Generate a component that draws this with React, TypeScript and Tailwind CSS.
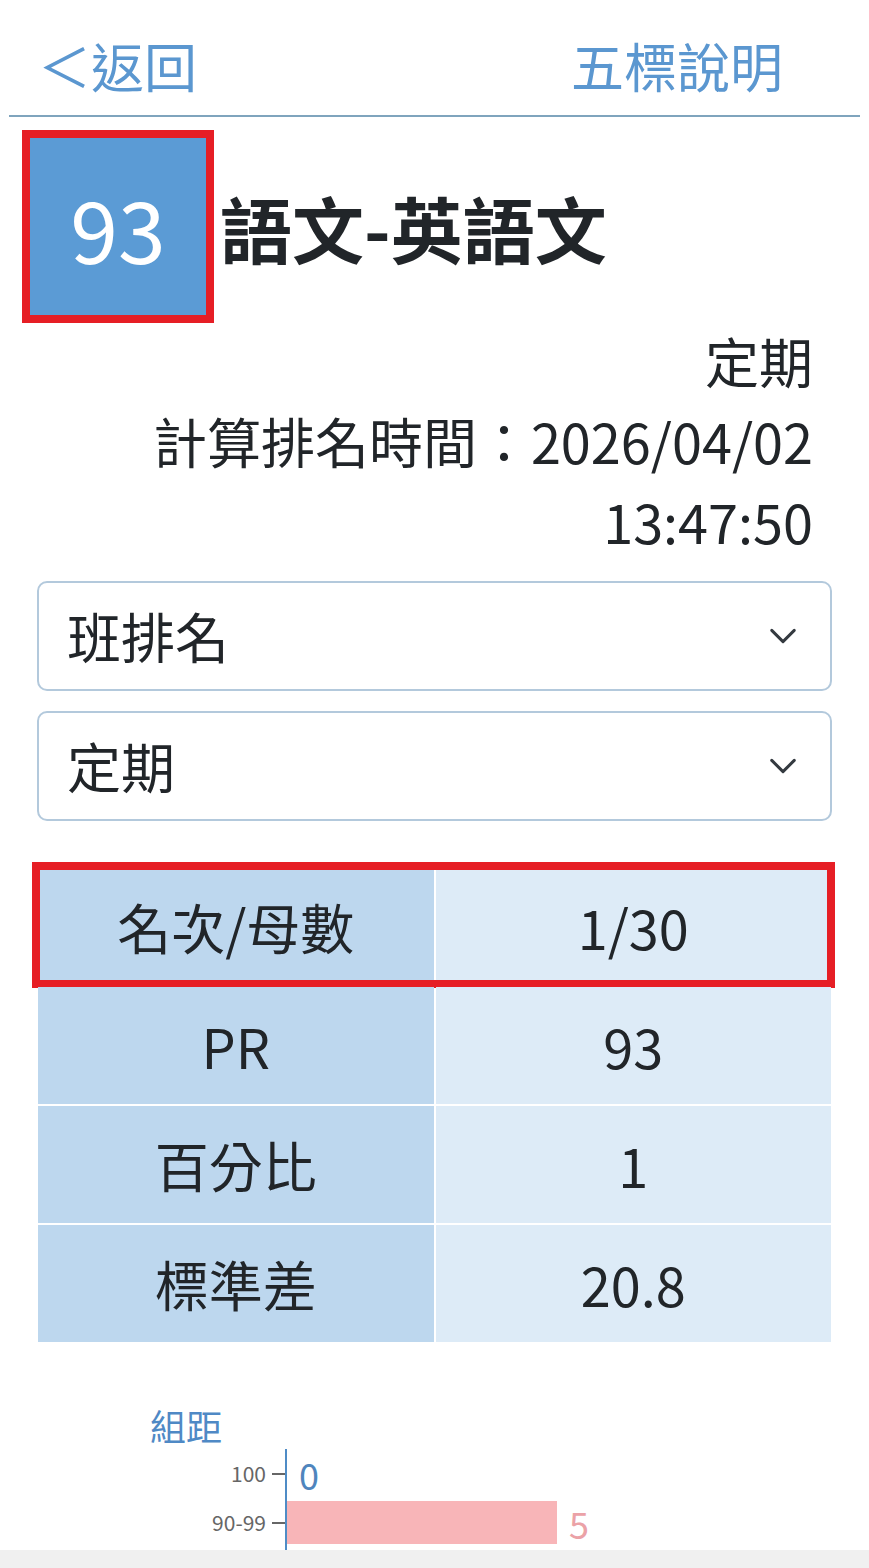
const rows = [
  { label: '名次/母數', value: '1/30' },
  { label: 'PR', value: '93' },
  { label: '百分比', value: '1' },
  { label: '標準差', value: '20.8' },
];

const bins = [
  { label: '100', count: 0, color: 'bg-[#5b9bd5]', text: 'text-[#4f85bd]' },
  { label: '90-99', count: 5, color: 'bg-[#f8b5b8]', text: 'text-[#eba2a7]' },
];

function Select({ value }: { value: string }) {
  return (
    <div className="flex h-[110px] items-center justify-between rounded-[10px] border-2 border-[#b3c9dc] pl-[28px] pr-[32px]">
      <span className="text-[54px] leading-none text-[#212529]">{value}</span>
      <svg width="30" height="30" viewBox="0 0 16 16" fill="none">
        <path d="m2 5 6 6 6-6" stroke="#343a40" strokeWidth="1.6" strokeLinecap="round" strokeLinejoin="round" />
      </svg>
    </div>
  );
}

export default function App() {
  const maxCount = 5;

  return (
    <div className="min-h-screen bg-white px-[9px] font-['Noto_Sans_CJK_TC','Noto_Sans',sans-serif] text-[#212529]">
      {/* header */}
      <div className="flex items-center justify-between border-b-2 border-[#7fa4bd] pb-[10px] pl-[29px] pr-[77px] pt-[25px] text-[53px] leading-[80px] text-[#5b97d0]">
        <span>＜返回</span>
        <span>五標說明</span>
      </div>

      {/* score + subject */}
      <div className="mt-[13px] flex items-center gap-[6px] pl-[13px]">
        <div className="flex h-[193px] w-[192px] items-center justify-center border-8 border-[#e61e25] bg-[#5b9bd5]">
          <span className="text-[86px] leading-none text-white">93</span>
        </div>
        <h1 className="text-[72px] font-bold leading-none">語文-英語文</h1>
      </div>

      <div className="-mt-[2px] pr-[47px] text-right text-[54px] leading-[80px]">
        <div>定期</div>
        <div>計算排名時間：2026/04/02</div>
        <div>13:47:50</div>
      </div>

      <div className="mt-[20px] flex flex-col gap-[20px] px-[28px]">
        <Select value="班排名" />
        <Select value="定期" />
      </div>

      {/* stats table */}
      <div className="mt-[47px] flex flex-col gap-[2px] px-[29px]">
        {rows.map((r, i) => (
          <div key={r.label} className="relative grid h-[117px] grid-cols-2 gap-[2px] text-[54px]">
            <div className="flex items-center justify-center bg-[#bdd7ee]">{r.label}</div>
            <div className="flex items-center justify-center bg-[#ddebf7]">{r.value}</div>
            {i === 0 && (
              <div className="pointer-events-none absolute -bottom-[3px] -left-[6px] -right-[4px] -top-[6px] border-8 border-[#e61e25]" />
            )}
          </div>
        ))}
      </div>

      {/* distribution chart */}
      <div className="mt-[62px] pb-[60px]">
        <div className="pl-[141px] text-[36px] leading-[43px] text-[#4f89c5]">組距</div>
        <div className="mt-[2px] flex flex-col">
          {bins.map((b) => (
            <div key={b.label} className="flex h-[49px] items-center">
              <div className="w-[257px] text-right text-[21px] text-[#666]">{b.label}</div>
              <div className="ml-[6px] h-[2px] w-[13px] bg-[#666]" />
              <div className="flex h-full items-center border-l-2 border-[#4f8cc6]">
                <div className={`h-[43px] ${b.color}`} style={{ width: (b.count / maxCount) * 270 }} />
                <span className={`ml-[12px] text-[36px] leading-none ${b.text}`}>{b.count}</span>
              </div>
            </div>
          ))}
          {/* next bar, mostly behind the bottom bar */}
          <div className="flex h-[49px] items-center pl-[276px]">
            <div className="flex h-full items-center border-l-2 border-[#4f8cc6]">
              <div className="h-[43px] w-[270px] bg-[#bdd7ee]" />
            </div>
          </div>
        </div>
      </div>

      <div className="fixed inset-x-0 bottom-0 h-[18px] bg-[#f0f0f0]" />
    </div>
  );
}
